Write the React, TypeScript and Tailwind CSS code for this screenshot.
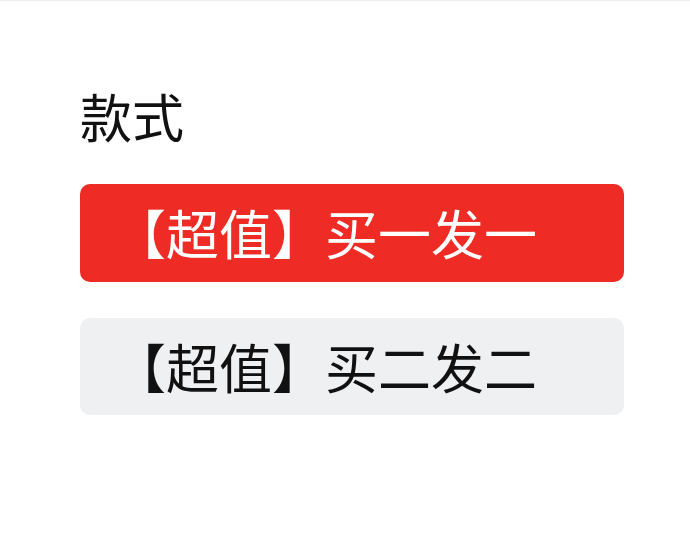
export default function App() {
  const font = { fontFamily: '"Noto Sans CJK SC", "Noto Sans", sans-serif' };
  return (
    <div className="w-[690px] h-[544px] bg-white border-t border-[#ececec]" style={font}>
      <div className="pt-[81px] pl-[80px] pr-[66px]">
        <h1 className="text-[52px] leading-[68px] text-[#111] font-normal">款式</h1>

        <div className="mt-[34px] flex flex-col gap-[36px]">
          <button className="h-[98px] w-full rounded-[10px] bg-[#ee2b24] text-white text-[53px] flex items-center pl-[33px]">
            【超值】买一发一
          </button>
          <button className="h-[97px] w-full rounded-[10px] bg-[#eff0f2] text-[#111] text-[53px] flex items-center pl-[33px]">
            【超值】买二发二
          </button>
        </div>
      </div>
    </div>
  );
}
